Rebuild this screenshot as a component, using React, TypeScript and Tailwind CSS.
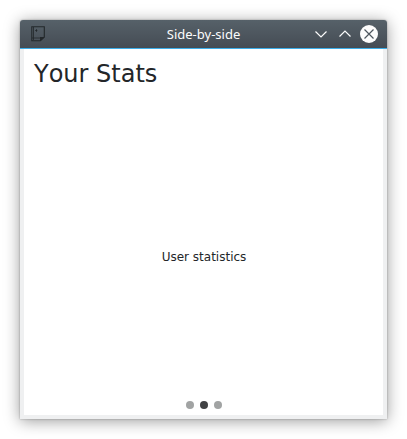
function TitleBar() {
  return (
    <header className="relative flex h-[29px] shrink-0 items-center justify-between rounded-t-[3px] border-b border-[#3daee9] bg-linear-to-b from-[#566169] to-[#454c54] pr-[9px] pl-[11px]">
      <svg className="h-4 w-[14px]" viewBox="0 0 14 16" fill="none" stroke="#23282b">
        <path d="M.8 .7v14.100H9.500L13.300 11V.7z" strokeWidth="1.1" />
        <path d="M2.500 1v13M1 12h8" strokeOpacity=".8" />
        <path d="M9 15v-4h4.800z" fill="#23282b" stroke="none" />
        <path d="M4.300 4.500h2M5.500 3.300v2.400" />
      </svg>
      <h1 className="absolute inset-x-0 top-[5px] text-center font-['Noto_Sans',sans-serif] text-[13px] leading-[18px] text-[#fcfcfc]">
        Side-by-side
      </h1>
      <div className="flex items-center gap-[6px]">
        <svg className="size-[18px]" viewBox="0 0 18 18" fill="none" stroke="#fcfcfc" strokeWidth="1.2">
          <path d="M3.500 6.500 9 12l5.500-5.500" />
        </svg>
        <svg className="size-[18px]" viewBox="0 0 18 18" fill="none" stroke="#fcfcfc" strokeWidth="1.2">
          <path d="M3.500 11.500 9 6l5.500 5.500" />
        </svg>
        <svg className="size-[18px]" viewBox="0 0 18 18" fill="none">
          <circle cx="9" cy="9" r="9" fill="#fcfcfc" />
          <path d="m4.500 4.500 9 9m0-9-9 9" stroke="#4d565e" strokeWidth="1.2" />
        </svg>
      </div>
    </header>
  );
}

export default function App() {
  return (
    <div className="h-[439px] w-[407px] overflow-hidden bg-white p-5">
      <main className="flex h-[399px] w-[367px] flex-col rounded-t-[3px] bg-[#eff0f1] shadow-[0_0_2px_rgba(0,0,0,0.35),0_2px_16px_rgba(0,0,0,0.4)]">
        <TitleBar />
        <section className="mx-1 mb-1 flex flex-1 flex-col bg-white font-['DejaVu_Sans',sans-serif] text-[#232629]">
          <h2 className="mt-[11px] ml-[10px] text-[24px] leading-7 [font-kerning:none]">Your Stats</h2>
          <p className="mt-[161px] pl-px text-center text-[12px] leading-4">User statistics</p>
          <div className="mt-auto mb-[6px] flex justify-center gap-[6px] pl-px">
            <span className="size-2 rounded-full bg-[#a1a3a3]" />
            <span className="size-2 rounded-full bg-[#414244]" />
            <span className="size-2 rounded-full bg-[#a1a3a3]" />
          </div>
        </section>
      </main>
    </div>
  );
}
